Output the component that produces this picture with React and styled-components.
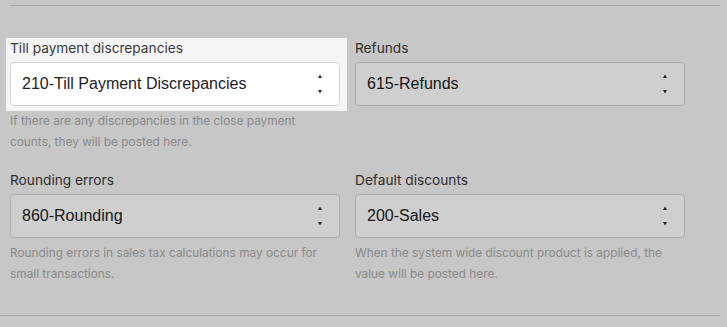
import React from "react"
import styled, { createGlobalStyle } from "styled-components"

const GlobalStyle = createGlobalStyle`
  html, body {
    margin: 0;
    padding: 0;
    height: 100%;
    background: #f5f5f5;
    overflow: hidden;
  }
  body {
    font-family: "Liberation Sans", Arial, sans-serif;
  }
`

const fields = [
  {
    label: "Till payment discrepancies",
    value: "210-Till Payment Discrepancies",
    help: "If there are any discrepancies in the close payment counts, they will be posted here.",
    highlighted: true,
  },
  { label: "Refunds", value: "615-Refunds" },
  {
    label: "Rounding errors",
    value: "860-Rounding",
    help: "Rounding errors in sales tax calculations may occur for small transactions.",
  },
  {
    label: "Default discounts",
    value: "200-Sales",
    help: "When the system wide discount product is applied, the value will be posted here.",
  },
]

const SelectArrows = () => (
  <svg width="6" height="22" viewBox="0 0 6 22" aria-hidden="true">
    <path d="M3 1.5 L5 5 L1 5 Z" fill="#2b2b2b" />
    <path d="M1 17 L5 17 L3 20.5 Z" fill="#2b2b2b" />
  </svg>
)

const Field = ({ label, value, help, highlighted }) => (
  <StyledField>
    <Control $highlighted={highlighted}>
      <Label>{label}</Label>
      <SelectBox role="combobox">
        <span>{value}</span>
        <SelectArrows />
      </SelectBox>
    </Control>
    {help && <Help>{help}</Help>}
  </StyledField>
)

const App = () => {
  return (
    <>
      <GlobalStyle />
      <Page>
        <TopRule />
        <FormGrid>
          {fields.map((field, index) => (
            <Field key={index} {...field} />
          ))}
        </FormGrid>
        <BottomRule />
      </Page>
    </>
  )
}

const Page = styled.main`
  box-sizing: border-box;
  min-height: 100vh;
  padding-top: 5px;
  width: 727px;
`

const TopRule = styled.div`
  margin-left: 10px;
  width: 710px;
  height: 1px;
  background: #d2d2d2;
`

const BottomRule = styled.div`
  width: 720px;
  height: 1px;
  background: #d2d2d2;
`

const FormGrid = styled.div`
  display: grid;
  grid-template-columns: 330px 330px;
  column-gap: 15px;
  row-gap: 17px;
  padding: 32px 0 30px 10px;
`

const StyledField = styled.div`
  display: flex;
  flex-direction: column;
`

const Control = styled.div`
  position: relative;
  z-index: ${(p) => (p.$highlighted ? 1 : "auto")};

  &::before {
    content: "";
    display: ${(p) => (p.$highlighted ? "block" : "none")};
    position: absolute;
    top: 0;
    right: -7px;
    bottom: -5px;
    left: -4px;
    z-index: -1;
    background: #f5f5f5;
    box-shadow: 0 0 0 9999px rgba(0, 0, 0, 0.19);
  }
`

const Label = styled.div`
  font-family: Inter, "Liberation Sans", sans-serif;
  font-size: 13.7px;
  line-height: 20px;
  color: #3a3a3a;
`

const SelectBox = styled.div`
  display: flex;
  align-items: center;
  justify-content: space-between;
  box-sizing: border-box;
  height: 44px;
  margin-top: 4px;
  padding: 0 16px 0 11px;
  background: #fff;
  border: 1px solid #d6d6d6;
  border-radius: 4px;
  font-size: 16px;
  color: #222;
`

const Help = styled.p`
  margin: 5px 0 0;
  font-family: Inter, "Liberation Sans", sans-serif;
  font-size: 11.85px;
  line-height: 21px;
  color: #aaaaaa;
`

export default App
